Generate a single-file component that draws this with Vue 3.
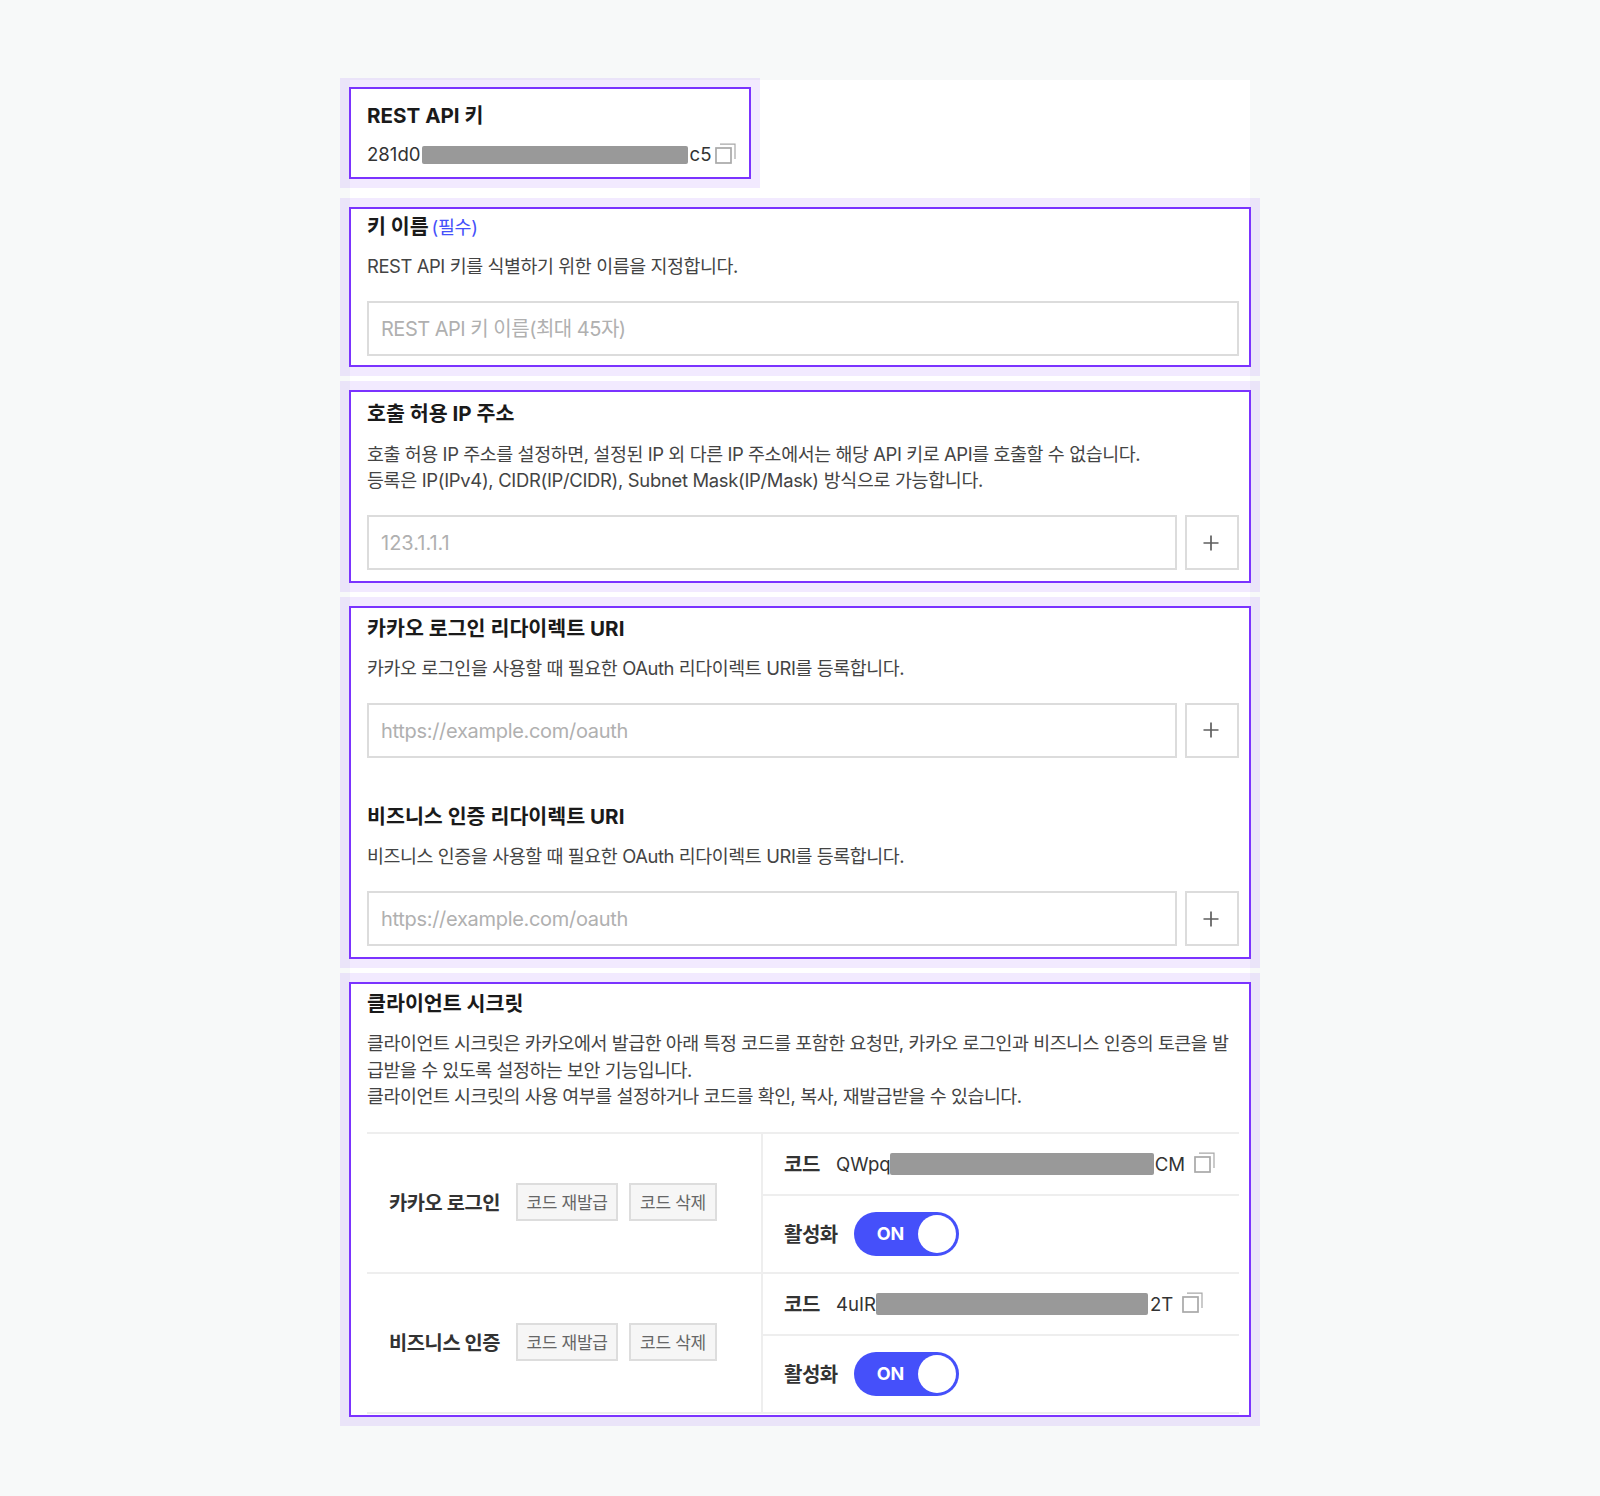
<script setup>
const clients = [
  { name: '카카오 로그인', pre: 'QWpq', maskW: 264, maskL: -1, maskR: 1, post: 'CM' },
  { name: '비즈니스 인증', pre: '4uIR', maskW: 272, maskL: 0, maskR: 2, post: '2T' },
]
</script>

<template>
  <div class="page">
    <main class="panel">
      <section class="sec sec-key">
        <h2 class="title">REST API 키</h2>
        <div class="value key-value">
          <span>281d0</span><i class="mask key-mask"></i><span>c5</span>
          <svg class="copy" viewBox="0 0 21 21" fill="none"><rect x="1" y="5" width="15" height="15" stroke="#a8a8a8" stroke-width="1.7"/><path d="M5 1.2H20V16" stroke="#a8a8a8" stroke-width="1.2"/></svg>
        </div>
      </section>

      <section class="sec sec-name">
        <h2 class="title">키 이름 <em class="req">(필수)</em></h2>
        <p class="desc desc-name">REST API 키를 식별하기 위한 이름을 지정합니다.</p>
        <input class="field field-name" placeholder="REST API 키 이름(최대 45자)" />
      </section>

      <section class="sec sec-ip">
        <h2 class="title">호출 허용 IP 주소</h2>
        <p class="desc">호출 허용 IP 주소를 설정하면, 설정된 IP 외 다른 IP 주소에서는 해당 API 키로 API를 호출할 수 없습니다.<br /><span class="latin-line">등록은 IP(IPv4), CIDR(IP/CIDR), Subnet Mask(IP/Mask) 방식으로 가능합니다.</span></p>
        <div class="input-row">
          <input class="field field-ip" placeholder="123.1.1.1" />
          <button class="add"><svg viewBox="0 0 16 16" width="16" height="16"><path d="M8 0.5V15.5M0.5 8H15.5" stroke="#5f5f5f" stroke-width="1.7"/></svg></button>
        </div>
      </section>

      <section class="sec sec-uri">
        <h2 class="title">카카오 로그인 리다이렉트 URI</h2>
        <p class="desc desc-first">카카오 로그인을 사용할 때 필요한 OAuth 리다이렉트 URI를 등록합니다.</p>
        <div class="input-row">
          <input class="field" placeholder="https://example.com/oauth" />
          <button class="add"><svg viewBox="0 0 16 16" width="16" height="16"><path d="M8 0.5V15.5M0.5 8H15.5" stroke="#5f5f5f" stroke-width="1.7"/></svg></button>
        </div>
        <h2 class="title title-second">비즈니스 인증 리다이렉트 URI</h2>
        <p class="desc desc-second">비즈니스 인증을 사용할 때 필요한 OAuth 리다이렉트 URI를 등록합니다.</p>
        <div class="input-row">
          <input class="field" placeholder="https://example.com/oauth" />
          <button class="add"><svg viewBox="0 0 16 16" width="16" height="16"><path d="M8 0.5V15.5M0.5 8H15.5" stroke="#5f5f5f" stroke-width="1.7"/></svg></button>
        </div>
      </section>

      <section class="sec sec-secret">
        <h2 class="title">클라이언트 시크릿</h2>
        <p class="desc">클라이언트 시크릿은 카카오에서 발급한 아래 특정 코드를 포함한 요청만, 카카오 로그인과 비즈니스 인증의 토큰을 발급받을 수 있도록 설정하는 보안 기능입니다.<br />클라이언트 시크릿의 사용 여부를 설정하거나 코드를 확인, 복사, 재발급받을 수 있습니다.</p>
        <div class="table">
          <div v-for="c in clients" :key="c.name" class="row">
            <div class="left">
              <strong class="name">{{ c.name }}</strong>
              <button class="btn btn-reissue">코드 재발급</button>
              <button class="btn btn-delete">코드 삭제</button>
            </div>
            <div class="right">
              <div class="code-row">
                <strong class="label code-label">코드</strong>
                <span class="value">{{ c.pre }}</span><i class="mask code-mask" :style="{ width: c.maskW + 'px', marginLeft: c.maskL + 'px', marginRight: c.maskR + 'px' }"></i><span class="value">{{ c.post }}</span>
                <svg class="copy copy-code" viewBox="0 0 21 21" fill="none"><rect x="1" y="5" width="15" height="15" stroke="#a8a8a8" stroke-width="1.7"/><path d="M5 1.2H20V16" stroke="#a8a8a8" stroke-width="1.2"/></svg>
              </div>
              <div class="toggle-row">
                <strong class="label">활성화</strong>
                <div class="toggle"><span class="on">ON</span><i class="knob"></i></div>
              </div>
            </div>
          </div>
        </div>
      </section>
    </main>
  </div>
</template>

<style>
body { background: #f7f9f9; }
</style>

<style scoped>
.page {
  min-height: 1496px;
  background: #f7f9f9;
  padding-top: 80px;
  box-sizing: border-box;
  font-family: Inter, "Noto Sans CJK KR", sans-serif;
  color: #1f1f1f;
}
.panel {
  width: 900px;
  margin: 0 auto;
  padding-top: 7px;
  height: 1337px;
  box-sizing: border-box;
  background: #fff;
  display: flex;
  flex-direction: column;
  gap: 23px;
}
.sec {
  flex: none;
  margin: 0 -1px;
  border: 2px solid #7b33ff;
  box-shadow: 0 0 0 9px rgba(123, 51, 255, 0.1);
  padding: 5px 10px 9px 16px;
  box-sizing: border-box;
}
.sec-key { width: 402px; height: 92px; padding-top: 14px; margin-bottom: 5px; }
.sec-name { height: 160px; padding-top: 5px; }
.sec-ip { height: 193px; padding-top: 9px; }
.sec-uri { height: 353px; padding-top: 8px; }
.sec-secret { height: 435px; padding-top: 7px; padding-bottom: 0; }
.title {
  margin: 0;
  font-size: 20.6px;
  line-height: 26px;
  font-weight: 700;
  color: #1a1a1a;
}
.title-second { margin-top: 46px; }
.req {
  font-style: normal;
  font-weight: 400;
  font-size: 18.4px;
  letter-spacing: -0.3px;
  margin-left: -2px;
  color: #4550fa;
}
.desc {
  margin: 13px 0 22px;
  font-size: 18.4px;
  line-height: 26.5px;
  color: #444;
  letter-spacing: -0.4px;
}
.desc-name { margin-bottom: 21px; }
.latin-line { letter-spacing: -0.3px; }
.sec-ip .desc { margin: 13.5px 0 21.5px; }
.desc-first { margin: 13px 0 21px; }
.desc-second { margin: 13px 0 22px; }
.sec-secret .desc { margin: 13px 0 22px; letter-spacing: -0.45px; }
.field {
  display: block;
  width: 100%;
  height: 55px;
  padding: 1px 12px 0;
  box-sizing: border-box;
  border: 2px solid #dcdcdc;
  background: #fff;
  outline: none;
  font: inherit;
  font-size: 20px;
  letter-spacing: -0.3px;
  color: #333;
}
.field-name { letter-spacing: -0.5px; }
.field-ip { letter-spacing: 0; }
.field::placeholder { color: #b0b0b0; opacity: 1; }
.input-row { display: flex; gap: 8px; }
.input-row .field { flex: 1; min-width: 0; }
.add {
  width: 54px;
  height: 55px;
  flex: none;
  padding: 0 3px 0 0;
  border: 2px solid #dcdcdc;
  background: #fff;
  display: flex;
  align-items: center;
  justify-content: center;
}
.value { font-size: 18.6px; line-height: 22px; color: #333; }
.key-value { display: flex; align-items: center; margin-top: 12px; height: 26px; }
.mask { display: block; background: #999; border-radius: 2px; }
.key-mask { width: 266px; height: 18px; margin: 2px 2px 0 1px; }
.copy { width: 21px; height: 21px; flex: none; margin-left: 4px; margin-top: -1px; }
.table { border-top: 2px solid #eeeeee; }
.row { display: flex; height: 140px; border-bottom: 2px solid #eeeeee; box-sizing: border-box; }
.left {
  width: 396px;
  flex: none;
  display: flex;
  align-items: center;
  padding-left: 22px;
  padding-bottom: 2px;
  box-sizing: border-box;
  border-right: 2px solid #eeeeee;
}
.name { font-size: 19.8px; font-weight: 700; color: #333; letter-spacing: -0.4px; width: 127px; flex: none; }
.btn {
  height: 38px;
  padding: 0;
  border: 2px solid #dddddd;
  background: #f6f6f6;
  font: inherit;
  font-size: 17px;
  letter-spacing: -0.3px;
  color: #666;
}
.btn-reissue { width: 102px; margin-right: 11px; }
.btn-delete { width: 88px; }
.right { flex: 1; display: flex; flex-direction: column; }
.code-row {
  height: 62px;
  display: flex;
  align-items: center;
  padding-left: 21px;
  border-bottom: 2px solid #eeeeee;
  box-sizing: border-box;
}
.label { font-size: 20px; font-weight: 700; color: #333; letter-spacing: -0.5px; }
.code-label { width: 52px; flex: none; }
.code-mask { height: 22px; }
.copy-code { margin-left: 9px; margin-top: -3px; }
.toggle-row {
  flex: 1;
  display: flex;
  align-items: center;
  padding-left: 21px;
}
.toggle {
  margin-left: 16px;
  width: 105px;
  height: 44px;
  border-radius: 22px;
  background: #4550fa;
  display: flex;
  align-items: center;
  justify-content: space-between;
  padding: 0 3px 0 23px;
  box-sizing: border-box;
}
.on { color: #fff; font-size: 18px; font-weight: 700; }
.knob { display: block; width: 38px; height: 38px; border-radius: 50%; background: #fff; }
</style>
